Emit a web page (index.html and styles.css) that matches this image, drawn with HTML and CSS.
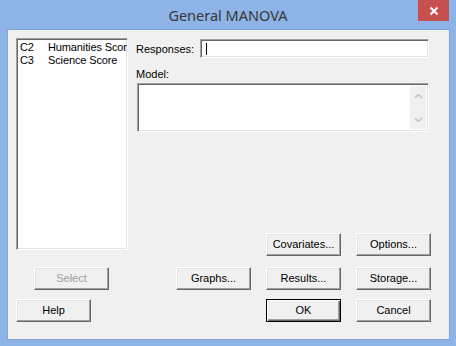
FILE: index.html
```html
<!DOCTYPE html>
<html>
<head>
<meta charset="utf-8">
<link rel="stylesheet" href="styles.css">
</head>
<body>
<div class="window">
  <div class="titlebar">
    <span class="title">General MANOVA</span>
    <div class="close">
      <svg width="10" height="10" viewBox="0 0 10 10"><path d="M1.5 1.5 L8.5 8.5 M8.5 1.5 L1.5 8.5" stroke="#fff" stroke-width="2" fill="none"/></svg>
    </div>
  </div>
  <div class="client">
    <div class="top">
      <div class="listbox sunken">
        <div class="item"><span class="col">C2</span><span>Humanities Score</span></div>
        <div class="item"><span class="col">C3</span><span>Science Score</span></div>
      </div>
      <div class="panel">
        <div class="resp-row">
          <span class="label resp-label">Responses:</span>
          <div class="input sunken"><span class="caret"></span></div>
        </div>
        <div class="label model-label">Model:</div>
        <div class="model sunken">
          <div class="scroll">
            <svg width="9" height="6" viewBox="0 0 9 6"><path d="M1 5 L4.5 1.5 L8 5" stroke="#c4c4c4" stroke-width="1.5" fill="none"/></svg>
            <svg width="9" height="6" viewBox="0 0 9 6"><path d="M1 1 L4.5 4.5 L8 1" stroke="#c4c4c4" stroke-width="1.5" fill="none"/></svg>
          </div>
        </div>
        <div class="spacer"></div>
        <div class="btn-row right">
          <div class="btn">Covariates...</div>
          <div class="btn">Options...</div>
        </div>
      </div>
    </div>
    <div class="row row-b">
      <div class="btn disabled sel">Select</div>
      <div class="btn graphs">Graphs...</div>
      <div class="btn gap15">Results...</div>
      <div class="btn gap15">Storage...</div>
    </div>
    <div class="row row-c">
      <div class="btn">Help</div>
      <div class="btn default ok">OK</div>
      <div class="btn gap15">Cancel</div>
    </div>
  </div>
</div>
</body>
</html>
```

FILE: styles.css
```css
html, body {
  margin: 0;
  padding: 0;
}
body {
  width: 456px;
  height: 346px;
  overflow: hidden;
  font-family: "Liberation Sans", Arial, sans-serif;
  font-size: 11px;
  color: #000;
}
.window {
  width: 456px;
  height: 346px;
  box-sizing: border-box;
  background: #8db3e7;
  padding: 0 6px 6px 7px;
  display: flex;
  flex-direction: column;
}
.titlebar {
  height: 29px;
  position: relative;
  display: flex;
  align-items: center;
  justify-content: center;
  margin-left: -7px;
  margin-right: -6px;
}
.title {
  font-family: "Noto Sans", "Open Sans", sans-serif;
  font-size: 14.5px;
  color: #383838;
  margin-top: 1px;
}
.close {
  position: absolute;
  left: 418px;
  top: 0;
  width: 31px;
  height: 21px;
  background: #c7504f;
  display: flex;
  align-items: center;
  justify-content: center;
}
.client {
  flex: 1;
  background: #f0f0f0;
  border: 1px solid #7fa4d9;
  padding: 8px 18px 0 8px;
  display: flex;
  flex-direction: column;
}
.sunken {
  box-sizing: border-box;
  background: #fff;
  border: 1px solid;
  border-color: #a0a0a0 #fff #fff #a0a0a0;
  box-shadow: inset 1px 1px 0 #696969, inset -1px -1px 0 #e3e3e3;
}
.top {
  display: flex;
  height: 218px;
}
.listbox {
  width: 112px;
  height: 212px;
  padding: 2px 0 0 3px;
  overflow: hidden;
  white-space: nowrap;
  letter-spacing: -0.12px;
}
.item {
  height: 13px;
  line-height: 13px;
}
.col {
  display: inline-block;
  width: 28px;
}
.panel {
  flex: 1;
  margin-left: 8px;
  display: flex;
  flex-direction: column;
}
.resp-row {
  display: flex;
  align-items: center;
  margin-top: 1px;
  height: 19px;
}
.resp-label {
  width: 64px;
}
.input {
  flex: 1;
  height: 19px;
  margin-right: 2px;
  padding: 3px 0 0 5px;
}
.caret {
  display: block;
  width: 1px;
  height: 12px;
  background: #000;
}
.model-label {
  margin-top: 10px;
  height: 13px;
  line-height: 13px;
}
.model {
  margin: 2px 2px 0 1px;
  height: 49px;
  display: flex;
  justify-content: flex-end;
  padding: 2px;
}
.scroll {
  width: 16px;
  background: #f0f0f0;
  display: flex;
  flex-direction: column;
  justify-content: space-between;
  align-items: center;
  padding: 7px 0 6px;
}
.scroll svg {
  display: block;
}
.spacer {
  flex: 1;
}
.btn-row {
  display: flex;
  gap: 15px;
}
.right {
  justify-content: flex-end;
}
.btn {
  box-sizing: border-box;
  width: 75px;
  height: 23px;
  background: #f0f0f0;
  border: 1px solid;
  border-color: #fff #696969 #696969 #fff;
  box-shadow: inset -1px -1px 0 #a0a0a0, inset 1px 1px 0 #e3e3e3;
  display: flex;
  align-items: center;
  justify-content: center;
  color: #000;
  padding-bottom: 1px;
}
.btn.disabled {
  color: #a0a0a0;
}
.btn.default {
  border: 1px solid #000;
  box-shadow: inset 1px 1px 0 #fff, inset -1px -1px 0 #696969, inset -2px -2px 0 #a0a0a0;
}
.row {
  display: flex;
}
.row-b {
  margin-top: 11px;
}
.row-c {
  margin-top: 9px;
}
.sel {
  margin-left: 18px;
}
.graphs {
  margin-left: 67px;
}
.gap15 {
  margin-left: 15px;
}
.ok {
  margin-left: 175px;
}
```
